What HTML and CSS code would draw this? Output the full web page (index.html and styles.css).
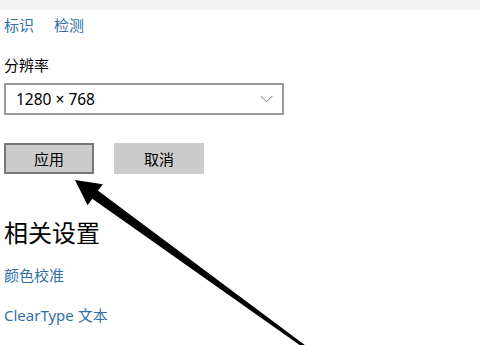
FILE: index.html
```html
<!DOCTYPE html>
<html lang="zh-CN">
<head>
    <meta charset="UTF-8">
    <title>显示设置</title>
    <link rel="stylesheet" href="styles.css">
</head>
<body>
    <div class="topbar"></div>
    <div class="page">
        <div class="links">
            <a class="link">标识</a>
            <a class="link">检测</a>
        </div>

        <div class="field-label">分辨率</div>
        <div class="select">
            <span>1280 × 768</span>
            <svg class="chevron" width="13" height="8" viewBox="0 0 13 8">
                <path d="M0.5 0.8 L6.5 6.8 L12.5 0.8" fill="none" stroke="#777" stroke-width="1"/>
            </svg>
        </div>

        <div class="buttons">
            <button class="btn btn-primary">应用</button>
            <button class="btn">取消</button>
        </div>

        <h2 class="section-title">相关设置</h2>
        <a class="link block first">颜色校准</a>
        <a class="link block">ClearType 文本</a>
    </div>

    <!-- annotation arrow drawn over the page -->
    <svg class="arrow" width="480" height="345" viewBox="0 0 480 345">
        <polygon points="75,180 102.8,184.2 98.1,190.7 305.9,345.8 304.1,348.2 92.3,198.7 87.6,205.2" fill="#000"/>
    </svg>
</body>
</html>
```

FILE: styles.css
```css
body {
    margin: 0;
    padding: 0;
    background: #ffffff;
    font-family: "Noto Sans", "Noto Sans CJK SC", sans-serif;
    color: #000;
    position: relative;
    height: 345px;
    overflow: hidden;
}

/* Grey strip at the top */
.topbar {
    height: 10px;
    background: #f2f2f2;
}

.page {
    padding-left: 4px;
}

.links {
    display: flex;
    gap: 20px;
    margin-top: 5px;
}

.link {
    color: #2f71a8;
    font-size: 15px;
    line-height: 20px;
    height: 20px;
}

.link.block {
    display: block;
    margin-top: 20px;
}

.link.first {
    margin-top: 16px;
}

.field-label {
    margin-top: 20px;
    font-size: 15px;
    line-height: 20px;
    height: 20px;
}

/* Dropdown */
.select {
    margin-top: 8px;
    width: 280px;
    height: 32px;
    box-sizing: border-box;
    border: 2px solid #999;
    display: flex;
    align-items: center;
    justify-content: space-between;
    padding: 0 9px 0 10px;
    font-size: 15.5px;
}

.chevron {
    display: block;
}

.buttons {
    display: flex;
    gap: 20px;
    margin-top: 28px;
}

.btn {
    width: 90px;
    height: 31px;
    box-sizing: border-box;
    border: none;
    background: #cccccc;
    font-family: "Noto Sans CJK SC", sans-serif;
    font-size: 15px;
    color: #000;
    padding: 0;
}

.btn-primary {
    border: 2px solid #777;
}

.section-title {
    margin: 43px 0 0;
    font-size: 24px;
    font-weight: normal;
    line-height: 32px;
    height: 32px;
}

.arrow {
    position: absolute;
    left: 0;
    top: 0;
}
```
